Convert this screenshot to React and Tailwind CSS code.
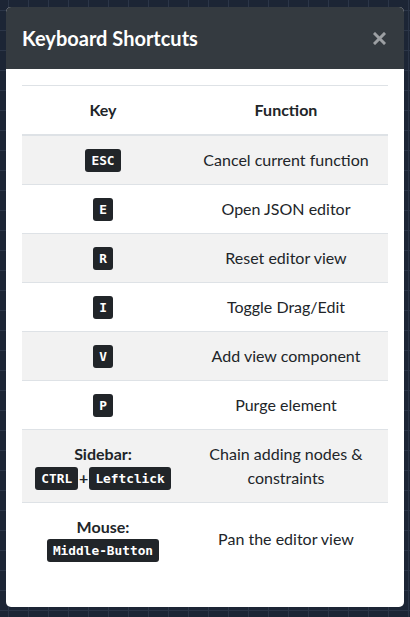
import React from "react";

const rows = [
  { keys: [["ESC"]], fn: "Cancel current function" },
  { keys: [["E"]], fn: "Open JSON editor" },
  { keys: [["R"]], fn: "Reset editor view" },
  { keys: [["I"]], fn: "Toggle Drag/Edit" },
  { keys: [["V"]], fn: "Add view component" },
  { keys: [["P"]], fn: "Purge element" },
  { label: "Sidebar:", keys: [["CTRL", "Leftclick"]], fn: "Chain adding nodes & constraints" },
  { label: "Mouse:", keys: [["Middle-Button"]], fn: "Pan the editor view" },
];

const Kbd = ({ children }) => (
  <kbd className="inline-block rounded-[3px] bg-[#212529] px-[6px] py-[3px] align-middle font-['DejaVu_Sans_Mono',monospace] text-[12.8px] font-bold leading-[17px] text-white">
    {children}
  </kbd>
);

const App = () => {
  return (
    <div className="h-[617px] w-[410px] overflow-hidden bg-[#1c2535] bg-[linear-gradient(to_right,#2b3547_1px,transparent_1px),linear-gradient(to_bottom,#2b3547_1px,transparent_1px)] pt-[7px] pl-[6px] [background-position:8px_10px] [background-size:20px_20px] font-['Lato',sans-serif] text-[#212529]">
      <div className="w-[398px] h-[600px] rounded-[5px] bg-white">
        {/* Header */}
        <div className="flex h-[62px] items-center justify-between rounded-t-[5px] bg-[#343a40] px-4">
          <h5 className="text-[20px] font-bold leading-[30px] text-white">Keyboard Shortcuts</h5>
          <button className="mr-[2px] p-0 text-[#9c9fa3]">
            <svg width="13" height="13" viewBox="0 0 13 13">
              <path d="M2 2L11 11M11 2L2 11" stroke="currentColor" strokeWidth="3" strokeLinecap="square" />
            </svg>
          </button>
        </div>

        {/* Body */}
        <div className="p-4">
          <table className="w-full border-collapse text-[16px] leading-6">
            <thead>
              <tr>
                <th className="w-[162px] border-t border-b-2 border-[#dee2e6] p-3 text-center font-bold">Key</th>
                <th className="border-t border-b-2 border-[#dee2e6] p-3 text-center font-bold">Function</th>
              </tr>
            </thead>
            <tbody>
              {rows.map((row, i) => (
                <tr key={i} className={i % 2 === 0 ? "bg-[#f2f2f2]" : "bg-white"}>
                  <td className={`h-[49px] p-3 text-center align-middle ${i > 0 ? "border-t border-[#dee2e6]" : ""}`}>
                    {row.label && <div className="font-bold">{row.label}</div>}
                    {row.keys.map((combo, j) => (
                      <div key={j} className="flex items-center justify-center font-bold">
                        {combo.map((k, n) => (
                          <React.Fragment key={n}>
                            {n > 0 && <span className="mx-[1px]">+</span>}
                            <Kbd>{k}</Kbd>
                          </React.Fragment>
                        ))}
                      </div>
                    ))}
                  </td>
                  <td className={`px-4 py-3 text-center align-middle ${i > 0 ? "border-t border-[#dee2e6]" : ""}`}>
                    {row.fn}
                  </td>
                </tr>
              ))}
            </tbody>
          </table>
        </div>
      </div>
    </div>
  );
};

export default App;
